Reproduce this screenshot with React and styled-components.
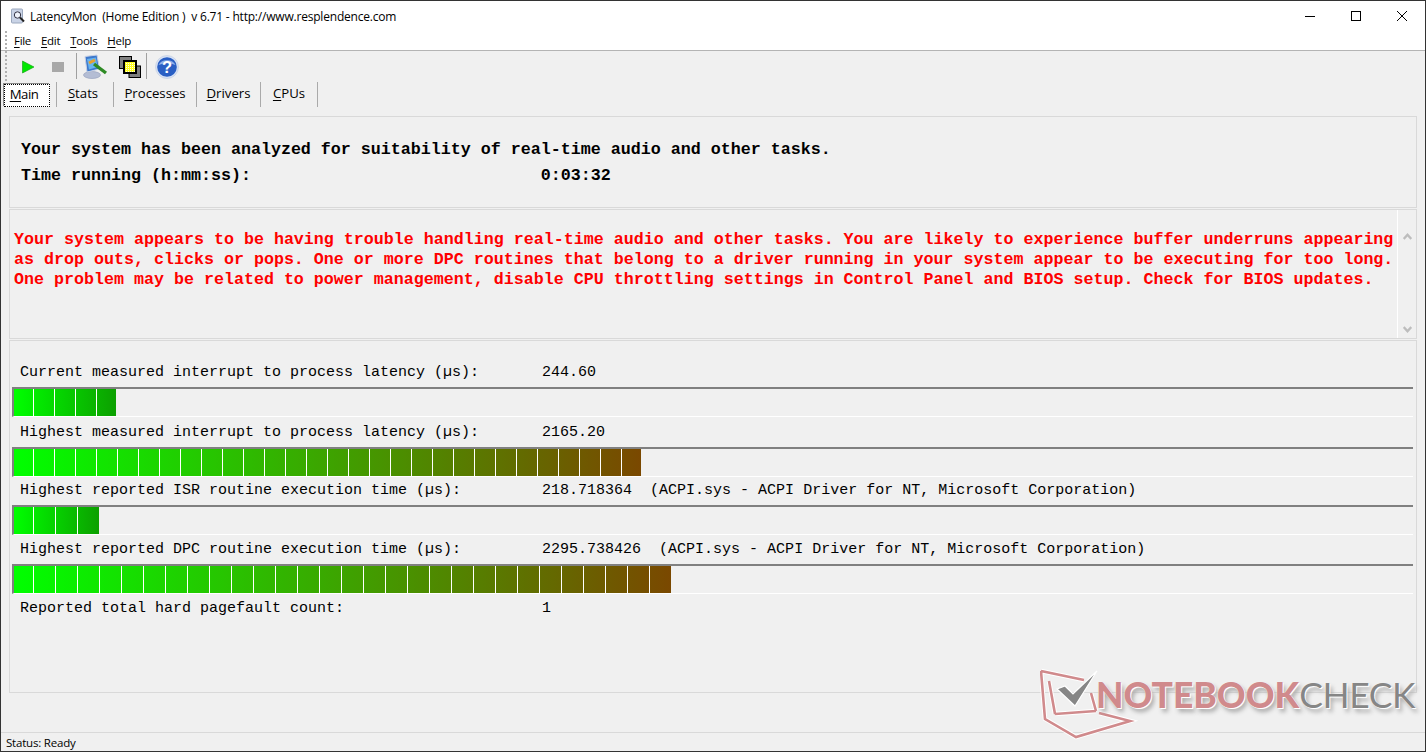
import React from "react";
import styled, { createGlobalStyle } from "styled-components";

const Global = createGlobalStyle`
  html, body { margin: 0; padding: 0; background: #f0f0f0; overflow: hidden; }
  #root { width: 1426px; height: 752px; }
  * { box-sizing: border-box; }
`;

const Win = styled.div`
  position: relative;
  width: 1426px; height: 752px;
  display: flex; flex-direction: column;
  background: #f0f0f0;
  border: 1px solid #333;
  font-family: "Open Sans", "Noto Sans", sans-serif;
  overflow: hidden;
`;
const TitleBar = styled.div`
  height: 30px; background: #fff; display: flex; align-items: center;
  padding-left: 9px; font-size: 12px; color: #000;
  flex: none;
`;
const AppIcon = styled.svg`width: 16px; height: 16px; margin-right: 4px; flex: none;`;
const TitleText = styled.span`flex: 1; white-space: pre; letter-spacing: -0.2px;`;
const WinBtn = styled.div`
  width: 46px; height: 30px; display: flex; align-items: center; justify-content: center;
`;
const MenuBar = styled.div`
  height: 20px; background: #fff; display: flex; align-items: center; padding-left: 4px;
  font-size: 11.5px; letter-spacing: -0.3px; color: #000;
  border-bottom: 1px solid #b4b4b4; flex: none;
  u { text-decoration-thickness: 1px; text-underline-offset: 2px; }
`;
const MenuItems = styled.div`display: flex; gap: 10px; margin-left: 7px;`;
const ToolBar = styled.div`
  height: 30px; display: flex; align-items: center; padding-left: 4px; flex: none;
`;
const Gripper = styled.div`
  width: 2px; height: ${p => p.$h}px; margin-right: ${p => p.$mr || 0}px; flex: none;
  background: repeating-linear-gradient(to bottom, #b0b0b0 0 2px, transparent 2px 4px);
`;
const ToolSlot = styled.div`
  width: ${p => p.$w}px; height: 26px; display: flex; align-items: center; justify-content: center;
  position: relative; top: 1px;
`;
const Sep = styled.div`width: 1px; height: 26px; background: #a0a0a0;`;
const TabBar = styled.div`
  height: 26px; display: flex; align-items: center; padding-left: 3px; flex: none;
  font-size: 13.2px; color: #000;
  u { text-decoration-thickness: 1px; text-underline-offset: 2px; }
`;
const Tab = styled.div`
  width: ${p => p.$w}px; height: 24px; display: flex; align-items: center; justify-content: center;
  padding-right: ${p => p.$pr || 0}px;
  ${p => p.$active ? `
    background: #fff; border: 1px dotted #000; box-shadow: -1px -1px 0 #888; height: 23px; margin-top: 2px;
  ` : ""}
`;
const TabLabel = styled.span`position: relative; top: -1px; letter-spacing: ${p => p.$ls || 0}px;`;
const TabSep = styled.div`width: 1px; height: 25px; background: #aaa; margin: 0 6px;`;
const Content = styled.div`
  flex: 1; padding: 9px 8px 0 8px; display: flex; flex-direction: column; gap: 1px;
`;
const Panel = styled.div`
  height: ${p => p.$h}px; border: 1px solid #d9d9d9; position: relative; flex: none;
  padding: ${p => p.$pad};
`;
const Mono = styled.div`
  font-family: "Liberation Mono", "Courier New", monospace; white-space: pre; color: #000;
`;
const Head = styled(Mono)`
  font-size: 16.67px; font-weight: 700; height: 26px; line-height: 26px;
`;
const Warn = styled(Mono)`
  font-size: 16.67px; font-weight: 700; color: #ff0000; height: 20px; line-height: 20px;
`;
const ScrollGutter = styled.div`
  position: absolute; right: 0; top: 0; bottom: 0; width: 19px; border-left: 1px solid #fff;
  display: flex; flex-direction: column; justify-content: space-between; align-items: center; padding: 23px 0 5px;
`;
const Metric = styled(Mono)`
  font-size: 15px; height: 18px; line-height: 18px; padding-left: 10px;
`;
const BarTrack = styled.div`
  height: 30px; margin: 5px 3px ${p => p.$mb}px 2px; border-top: 2px solid #808080; border-left: 2px solid #808080;
  border-bottom: 1px solid #fff;
`;
const BarFill = styled.div`height: 100%;`;
const StatusBar = styled.div`
  position: absolute; left: 0; right: 0; bottom: 0; height: 19px; border-top: 1px solid #d9d9d9;
  font-size: 11.5px; letter-spacing: -0.2px; color: #000; padding-left: 5px; line-height: 20px;
`;
const Mark = styled.div`
  position: absolute; left: 1039px; top: 666px; width: 380px; height: 74px; pointer-events: none;
`;
const MarkLogo = styled.svg`position: absolute; left: 0; top: 0;`;
const MarkText = styled.div`
  position: absolute; left: 56px; top: 6px; display: flex; white-space: pre;
  font-family: Lato, "Open Sans", sans-serif; font-size: 35.5px; line-height: 44px;
`;
const MarkA = styled.span`font-weight: 900; color: #d08a8c; text-shadow: 0 0 1px #fff, 1px 1px 0 #fff, 3px 4px 4px #aaa;`;
const MarkB = styled.span`font-weight: 400; color: #868686; letter-spacing: -0.4px; text-shadow: 0 0 1px #fff, 1px 1px 0 #fff, 3px 4px 4px #aaa;`;

function Bar({ width, pitch, end, mb = 6 }) {
  const bg = {
    width: `${width}px`,
    backgroundImage: `linear-gradient(to right, transparent ${pitch - 1}px, #fff ${pitch - 1}px), linear-gradient(to right, #00ff00, ${end})`,
    backgroundSize: `${pitch}px 100%, 100% 100%`,
    backgroundPosition: `-${pitch - 20}px 0, 0 0`,
    backgroundRepeat: "repeat-x, no-repeat",
  };
  return <BarTrack $mb={mb}><BarFill style={bg} /></BarTrack>;
}

const Chev = ({ up }) => (
  <svg width="9" height="7" viewBox="0 0 9 7">
    <path d={up ? "M.7 6 L4.5 1.8 L8.3 6" : "M.7 1 L4.5 5.2 L8.3 1"} fill="none" stroke="#bdbdbd" strokeWidth="2.4" />
  </svg>
);

export default function App() {
  return (
    <Win>
      <Global />
      <TitleBar>
        <AppIcon viewBox="0 0 16 16">
          <rect x="1.5" y="1" width="11" height="14" rx="1" fill="#c9d3e6" stroke="#9aa7bd" />
          <circle cx="7.5" cy="7" r="3.2" fill="#eef2fa" stroke="#334" />
          <path d="M10 9.5 L14 13.5" stroke="#222" strokeWidth="2" />
        </AppIcon>
        <TitleText>{"LatencyMon  (Home Edition )  v 6.71 - http://www.resplendence.com"}</TitleText>
        <WinBtn><svg width="10" height="10"><path d="M0 5.5H10" stroke="#000" /></svg></WinBtn>
        <WinBtn><svg width="10" height="10"><rect x=".5" y=".5" width="9" height="9" fill="none" stroke="#000" /></svg></WinBtn>
        <WinBtn><svg width="10" height="10"><path d="M0 0L10 10M10 0L0 10" stroke="#000" /></svg></WinBtn>
      </TitleBar>
      <MenuBar>
        <Gripper $h={20} />
        <MenuItems>
          <span><u>F</u>ile</span><span><u>E</u>dit</span><span><u>T</u>ools</span><span><u>H</u>elp</span>
        </MenuItems>
      </MenuBar>
      <ToolBar>
        <Gripper $h={30} $mr={8} />
        <ToolSlot $w={25}>
          <svg width="14" height="14" viewBox="0 0 14 14"><path d="M1.5 1L13 7L1.5 13Z" fill="#00e800" stroke="#0a9a0a" strokeWidth=".6" /></svg>
        </ToolSlot>
        <ToolSlot $w={36}>
          <svg width="12" height="10"><rect width="12" height="10" fill="#a8a8a8" /></svg>
        </ToolSlot>
        <Sep />
        <ToolSlot $w={36}>
          <svg width="26" height="26" viewBox="0 0 26 26">
            <ellipse cx="10" cy="21" rx="8.5" ry="3.5" fill="#b4bdd4" stroke="#8f9ab8" strokeWidth=".6" />
            <path d="M3 2.5L15 1L17.5 15L5 18Z" fill="#3d78cc" stroke="#c8d2e6" />
            <path d="M5 5L14 3.5L15.5 13L7 15.5Z" fill="#69b4ee" />
            <path d="M12 10L24 19" stroke="#2e8a24" strokeWidth="3.4" />
            <path d="M7 9L13 6" stroke="#e8a030" strokeWidth="3" />
          </svg>
        </ToolSlot>
        <ToolSlot $w={33}>
          <svg width="24" height="24" viewBox="0 0 24 24">
            <defs>
              <pattern id="dots" width="2" height="2" patternUnits="userSpaceOnUse">
                <rect width="2" height="2" fill="#ffff20" />
                <rect width="1" height="1" fill="#fffff0" />
              </pattern>
            </defs>
            <rect x="1.5" y="1.5" width="12" height="12" fill="#808080" stroke="#000" />
            <rect x="11" y="11" width="11.5" height="11.5" fill="#808080" stroke="#000" />
            <rect x="6" y="6" width="12" height="12" fill="url(#dots)" stroke="#000" strokeWidth="2" />
          </svg>
        </ToolSlot>
        <Sep />
        <ToolSlot $w={40}>
          <svg width="24" height="24" viewBox="0 0 24 24">
            <circle cx="12" cy="12" r="11.5" fill="#d8e2f4" stroke="#b8c4dc" strokeWidth=".5" />
            <circle cx="12" cy="12" r="9.8" fill="#2a5fc4" />
            <path d="M3.5 10 A9 7 0 0 1 20.5 10 A14 8 0 0 0 3.5 10" fill="#8fb0ea" />
            <text x="12" y="18" textAnchor="middle" fontFamily="Liberation Sans" fontWeight="700" fontSize="16.5" fill="#fff">?</text>
          </svg>
        </ToolSlot>
      </ToolBar>
      <TabBar>
        <Tab $w={46} $pr={6} $active><TabLabel $ls={-0.5}><u>M</u>ain</TabLabel></Tab>
        <TabSep />
        <Tab $w={44} $pr={4}><TabLabel><u>S</u>tats</TabLabel></Tab>
        <TabSep />
        <Tab $w={70}><TabLabel><u>P</u>rocesses</TabLabel></Tab>
        <TabSep />
        <Tab $w={51}><TabLabel><u>D</u>rivers</TabLabel></Tab>
        <TabSep />
        <Tab $w={44}><TabLabel><u>C</u>PUs</TabLabel></Tab>
        <TabSep />
      </TabBar>
      <Content>
        <Panel $h={92} $pad="20px 0 0 11px">
          <Head>Your system has been analyzed for suitability of real-time audio and other tasks.</Head>
          <Head>{"Time running (h:mm:ss):" + " ".repeat(29) + "0:03:32"}</Head>
        </Panel>
        <Panel $h={130} $pad="20px 0 0 4px">
          <Warn>Your system appears to be having trouble handling real-time audio and other tasks. You are likely to experience buffer underruns appearing</Warn>
          <Warn>as drop outs, clicks or pops. One or more DPC routines that belong to a driver running in your system appear to be executing for too long.</Warn>
          <Warn>One problem may be related to power management, disable CPU throttling settings in Control Panel and BIOS setup. Check for BIOS updates.</Warn>
          <ScrollGutter><Chev up /><Chev /></ScrollGutter>
        </Panel>
        <Panel $h={353} $pad="23px 0 0 0">
          <Metric>{"Current measured interrupt to process latency (µs):       244.60"}</Metric>
          <Bar width={102} pitch={21} end="#0ca000" mb={7} />
          <Metric>{"Highest measured interrupt to process latency (µs):       2165.20"}</Metric>
          <Bar width={627} pitch={21} end="#7a4800" mb={5} />
          <Metric>{"Highest reported ISR routine execution time (µs):         218.718364  (ACPI.sys - ACPI Driver for NT, Microsoft Corporation)"}</Metric>
          <Bar width={85} pitch={22} end="#0ca000" />
          <Metric>{"Highest reported DPC routine execution time (µs):         2295.738426  (ACPI.sys - ACPI Driver for NT, Microsoft Corporation)"}</Metric>
          <Bar width={657} pitch={22} end="#7a4800" />
          <Metric>{"Reported total hard pagefault count:                      1"}</Metric>
        </Panel>
      </Content>
      <StatusBar>Status: Ready</StatusBar>
      <Mark>
        <MarkLogo width="100" height="74" viewBox="0 0 100 74">
          <g fill="none" strokeLinejoin="miter">
            <path d="M1 4L44 13M1 4L5 52L36 70L90 54L59 46M15 47L56 44M9 14L15 47M51 26L56 44" stroke="#fff" strokeWidth="4.5" />
            <path d="M1 4L44 13M1 4L5 52L36 70L90 54L59 46M15 47L56 44M9 14L15 47M51 26L56 44" stroke="#d08a8c" strokeWidth="2.6" />
          </g>
          <path d="M17 22L25 19L33 27L57 4L35 39Z" fill="#868686" stroke="#fff" strokeWidth="1.2" />
        </MarkLogo>
        <MarkText><MarkA>NOTEBOOK</MarkA><MarkB>CHECK</MarkB></MarkText>
      </Mark>
    </Win>
  );
}
